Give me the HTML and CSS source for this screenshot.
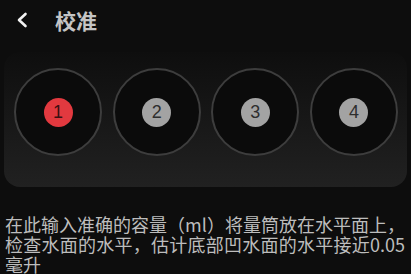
FILE: index.html
```html
<!DOCTYPE html>
<html lang="zh">
<head>
  <meta charset="UTF-8">
  <title>校准</title>
  <meta name="viewport" content="width=device-width, initial-scale=1.0">
  <link rel="stylesheet" href="styles.css">
</head>
<body>

  <div class="header">
    <svg class="back" width="12" height="16" viewBox="0 0 12 16">
      <path d="M9.5 2 L3 8 L9.5 14" fill="none" stroke="#f2f2f2" stroke-width="2.6" stroke-linecap="round" stroke-linejoin="round"/>
    </svg>
    <h1 class="title">校准</h1>
  </div>

  <div class="card">
    <div class="slot"><span class="dot active">1</span></div>
    <div class="slot"><span class="dot">2</span></div>
    <div class="slot"><span class="dot">3</span></div>
    <div class="slot"><span class="dot">4</span></div>
  </div>

  <p class="hint">在此输入准确的容量（ml）将量筒放在水平面上，检查水面的水平，估计底部凹水面的水平接近0.05<wbr>毫升</p>

</body>
</html>
```
FILE: styles.css
```css
body {
  margin: 0;
  background-color: #0d0d0d;
  color: #bdbdbd;
  font-family: "Noto Sans CJK SC", "Noto Sans", sans-serif;
  width: 411px;
  height: 274px;
  overflow: hidden;
}

.header {
  display: flex;
  align-items: center;
  height: 40px;
  padding-left: 16px;
}

.back {
  display: block;
}

.title {
  margin: 0 0 0 27px;
  font-size: 21px;
  font-weight: bold;
  color: #c4c4c4;
  line-height: 1;
}

.card {
  margin: 12px 4px 0 4px;
  height: 135px;
  box-sizing: border-box;
  padding: 16px 9px 0 10px;
  border-radius: 16px;
  background: linear-gradient(to bottom, #0e0e0e, #212121);
  display: flex;
  justify-content: space-between;
  align-items: flex-start;
}

.slot {
  width: 84px;
  height: 84px;
  border: 2px solid #3d3d3d;
  border-radius: 50%;
  background-color: #0b0b0b;
  display: flex;
  align-items: center;
  justify-content: center;
}

.dot {
  width: 29px;
  height: 29px;
  border-radius: 50%;
  background-color: #a3a3a3;
  color: #2e2e2e;
  font-family: "Liberation Sans", sans-serif;
  font-size: 18px;
  line-height: 29px;
  text-align: center;
}

.dot.active {
  background-color: #e2393f;
  color: #3a1012;
}

.hint {
  margin: 27px 0 0 5px;
  width: 400px;
  font-size: 18px;
  line-height: 20px;
  text-align: justify;
  color: #bdbdbd;
}
```
